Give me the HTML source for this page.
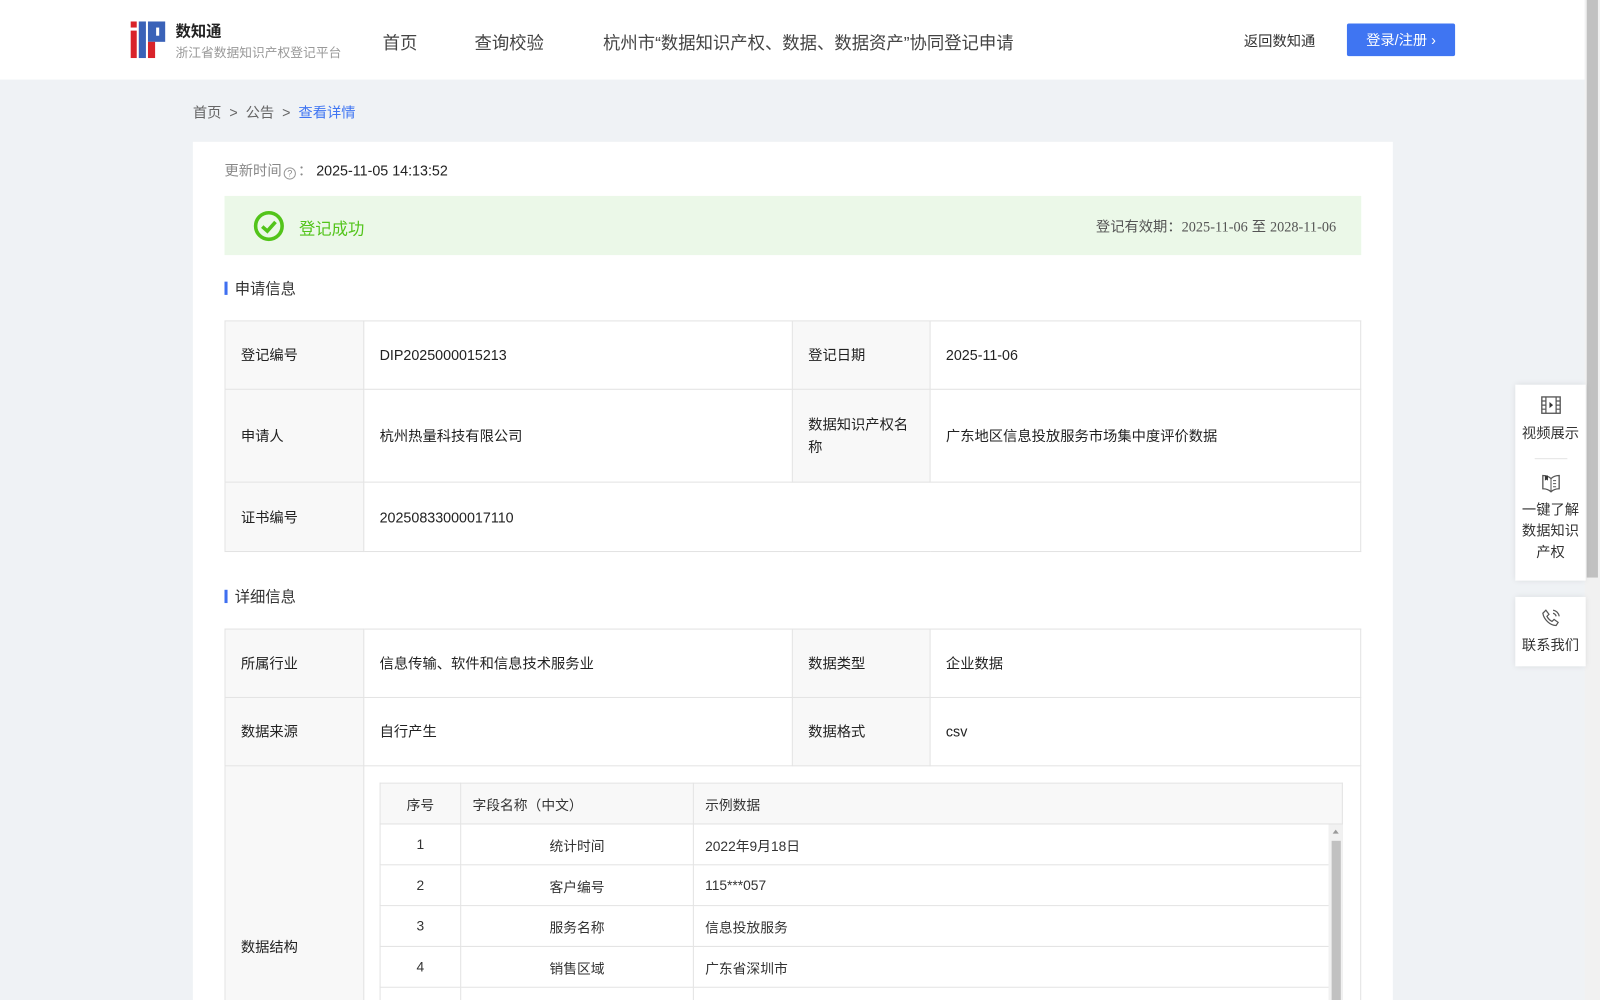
<!DOCTYPE html><html style="overflow:hidden"><head><meta charset="utf-8"><style>
*{margin:0;padding:0;box-sizing:border-box}
html,body{width:1600px;height:1000px;overflow:hidden}
body{background:#eff2f5;font-family:"Liberation Sans","Noto Sans CJK SC",sans-serif;color:#333;font-size:14px}
#w{position:absolute;left:0;top:0;width:1568px;height:980px;overflow:hidden;transform:scale(1.0204);transform-origin:0 0}
.a{position:absolute}
.hdr{left:0;top:0;width:1553px;height:78px;background:#fff}
.nav{top:28px;font-size:17px;color:#444}
table{border-collapse:collapse;position:absolute;table-layout:fixed}
td{border:1px solid #e3e3e3;font-size:14px;color:#222;padding:0 15px}
td.l{background:#f8f8f8}
.sec{font-size:15px;color:#333;padding-left:10px}
.sec:before{content:"";position:absolute;left:0;top:4px;width:3px;height:13px;background:#3f6ff0}
.in td{font-size:13.5px;padding:0 11px;height:40px;color:#333}
.side{left:1485px;width:69px;background:#fff;box-shadow:0 0 6px rgba(0,0,0,.1);text-align:center;font-size:14px;color:#333;line-height:21px}
</style></head><body><div id="w">
<div class="a hdr"></div>
<svg class="a" style="left:128px;top:21px" width="34" height="36" viewBox="0 0 34 36"><rect x="0" y="0" width="6" height="6" fill="#d9232a"/><rect x="0" y="9" width="6" height="27" fill="#d9232a"/><rect x="8" y="0" width="7" height="36" fill="#3a62b8"/><rect x="17" y="0" width="17" height="20" fill="#3a62b8"/><rect x="17" y="20" width="7" height="16" fill="#d9232a"/><rect x="25" y="6" width="3" height="8" fill="#fff"/></svg>
<div class="a" style="left:172px;top:20px;font-size:15px;font-weight:bold;color:#222">数知通</div>
<div class="a" style="left:172px;top:41px;font-size:12.5px;color:#999">浙江省数据知识产权登记平台</div>
<div class="a nav" style="left:375px">首页</div>
<div class="a nav" style="left:465px">查询校验</div>
<div class="a nav" style="left:591px">杭州市“数据知识产权、数据、数据资产”协同登记申请</div>
<div class="a" style="left:1219px;top:30px;font-size:14px;color:#333">返回数知通</div>
<div class="a" style="left:1320px;top:23px;width:106px;height:32px;background:#3f75f2;border-radius:2px;color:#fff;font-size:14px;text-align:center;line-height:32px">登录/注册 ›</div>
<div class="a" style="left:1553px;top:0;width:15px;height:1000px;background:#f1f1f1"></div>
<div class="a" style="left:1555px;top:0;width:11px;height:566px;background:#c1c1c1"></div>
<div class="a" style="left:189px;top:100px;font-size:14px;color:#666">首页 &nbsp;&gt;&nbsp; 公告 &nbsp;&gt;&nbsp; <span style="color:#3f75f2">查看详情</span></div>
<div class="a" style="left:189px;top:139px;width:1176px;height:861px;background:#fff"></div>
<div class="a" style="left:220px;top:157px;font-size:14px;color:#888">更新时间<span style="display:inline-block;width:12px;height:12px;border:1px solid #999;border-radius:50%;font-size:9px;text-align:center;line-height:11px;margin:0 2px;vertical-align:-1px">?</span>： <span style="color:#222">2025-11-05 14:13:52</span></div>
<div class="a" style="left:220px;top:192px;width:1114px;height:58px;background:#ebf8e8"></div>
<svg class="a" style="left:248px;top:206px" width="31" height="31" viewBox="0 0 31 31"><circle cx="15.5" cy="15.5" r="13" fill="none" stroke="#52c41a" stroke-width="3.5"/><path d="M9 16l5 4.5 8-9" fill="none" stroke="#52c41a" stroke-width="3.5"/></svg>
<div class="a" style="left:293px;top:211px;font-size:16px;color:#52c41a">登记成功</div>
<div class="a" style="left:1074px;top:212px;font-size:14px;color:#555">登记有效期：<span style="font-family:'Liberation Serif',serif">2025-11-06</span> 至 <span style="font-family:'Liberation Serif',serif">2028-11-06</span></div>
<div class="a sec" style="left:220px;top:272px">申请信息</div>
<table style="left:220px;top:314px;width:1114px">
<colgroup><col style="width:136px"><col style="width:420px"><col style="width:135px"><col></colgroup>
<tr style="height:67px"><td class="l">登记编号</td><td>DIP2025000015213</td><td class="l">登记日期</td><td>2025-11-06</td></tr>
<tr style="height:91px"><td class="l">申请人</td><td>杭州热量科技有限公司</td><td class="l" style="line-height:22px">数据知识产权名称</td><td>广东地区信息投放服务市场集中度评价数据</td></tr>
<tr style="height:68px"><td class="l">证书编号</td><td colspan="3">20250833000017110</td></tr>
</table>
<div class="a sec" style="left:220px;top:574px">详细信息</div>
<table style="left:220px;top:616px;width:1114px">
<colgroup><col style="width:136px"><col style="width:420px"><col style="width:135px"><col></colgroup>
<tr style="height:67px"><td class="l">所属行业</td><td>信息传输、软件和信息技术服务业</td><td class="l">数据类型</td><td>企业数据</td></tr>
<tr style="height:67px"><td class="l">数据来源</td><td>自行产生</td><td class="l">数据格式</td><td>csv</td></tr>
<tr style="height:354px"><td class="l">数据结构</td><td colspan="3"></td></tr>
</table>
<table class="in" style="left:372px;top:767px;width:944px">
<colgroup><col style="width:79px"><col style="width:228px"><col></colgroup>
<tr style="background:#f8f8f8"><td style="text-align:center">序号</td><td>字段名称（中文）</td><td>示例数据</td></tr>
<tr><td style="text-align:center">1</td><td style="text-align:center">统计时间</td><td>2022年9月18日</td></tr>
<tr><td style="text-align:center">2</td><td style="text-align:center">客户编号</td><td>115***057</td></tr>
<tr><td style="text-align:center">3</td><td style="text-align:center">服务名称</td><td>信息投放服务</td></tr>
<tr><td style="text-align:center">4</td><td style="text-align:center">销售区域</td><td>广东省深圳市</td></tr>
<tr><td></td><td></td><td></td></tr>
</table>
<div class="a" style="left:1302px;top:808px;width:14px;height:192px;background:#f1f1f1"></div>
<div class="a" style="left:1305px;top:824px;width:9px;height:176px;background:#c1c1c1"></div>
<div class="a" style="left:1306px;top:813px;width:0;height:0;border-left:3px solid transparent;border-right:3px solid transparent;border-bottom:4px solid #999"></div>
<div class="a side" style="top:377px;height:192px;padding-top:11px">
<svg width="20" height="18" viewBox="0 0 20 18"><rect x="1" y="1" width="18" height="16" fill="none" stroke="#555" stroke-width="1.3"/><path d="M5 1v16M15 1v16M1 5h4M1 9h4M1 13h4M15 5h4M15 9h4M15 13h4" stroke="#555" stroke-width="1.2"/><path d="M8.5 6l3.5 3-3.5 3z" fill="#333"/></svg>
<div style="margin-top:2px">视频展示</div>
<div style="width:32px;height:1px;background:#e3e3e3;margin:14px auto 13px"></div>
<svg width="20" height="20" viewBox="0 0 20 20"><path d="M2 3c3 0 6 1 8 3 2-2 5-3 8-3v13c-3 0-6 1-8 3-2-2-5-3-8-3z" fill="none" stroke="#555" stroke-width="1.3"/><path d="M10 6v13" stroke="#555"/><path d="M4 3v5l1.5-1 1.5 1V3" fill="#333"/><path d="M12 8h3M12 11h3M12 14h3" stroke="#555"/></svg>
<div>一键了解<br>数据知识<br>产权</div></div>
<div class="a side" style="top:585px;height:68px;padding-top:11px">
<svg width="20" height="20" viewBox="0 0 20 20"><path d="M5 2l3 4-2 2c1 2 3 4 5 5l2-2 4 3-2 3C9 17 3 11 2 5z" fill="none" stroke="#555" stroke-width="1.2"/><path d="M12 5a4 4 0 0 1 3 3M12 2a7 7 0 0 1 6 6" fill="none" stroke="#555" stroke-width="1.2"/></svg>
<div>联系我们</div></div>
</div></body></html>
